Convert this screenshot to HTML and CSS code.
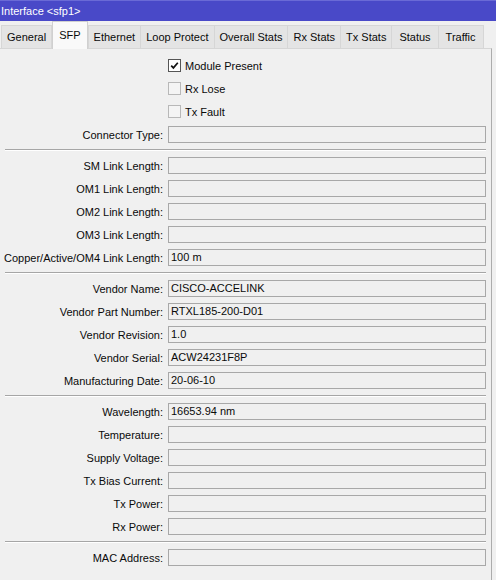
FILE: index.html
```html
<!DOCTYPE html>
<html lang="en">

<head>
    <meta charset="UTF-8">
    <meta name="viewport" content="width=device-width, initial-scale=1.0">
    <title>Interface &lt;sfp1&gt;</title>
    <link rel="stylesheet" href="styles.css">
</head>

<body>
    <div class="titlebar">Interface &lt;sfp1&gt;</div>
    <div class="tabs">
        <span class="tab">General</span>
        <span class="tab active">SFP</span>
        <span class="tab">Ethernet</span>
        <span class="tab">Loop Protect</span>
        <span class="tab">Overall Stats</span>
        <span class="tab">Rx Stats</span>
        <span class="tab">Tx Stats</span>
        <span class="tab wide">Status</span>
        <span class="tab wide">Traffic</span>
    </div>
    <div class="panel">
        <!-- 状态 -->
        <div class="row">
            <span></span>
            <label class="check"><span class="box checked"><svg viewBox="0 0 11 11" width="11" height="11"><path d="M2.2 5.6 L4.4 7.9 L8.8 2.8" fill="none" stroke="#111" stroke-width="1.7"/></svg></span>Module Present</label>
        </div>
        <div class="row">
            <span></span>
            <label class="check"><span class="box"></span>Rx Lose</label>
        </div>
        <div class="row">
            <span></span>
            <label class="check"><span class="box"></span>Tx Fault</label>
        </div>
        <div class="row">
            <label>Connector Type:</label>
            <div class="field"></div>
        </div>
        <div class="sep"></div>
        <!-- 链路长度 -->
        <div class="row">
            <label>SM Link Length:</label>
            <div class="field"></div>
        </div>
        <div class="row">
            <label>OM1 Link Length:</label>
            <div class="field"></div>
        </div>
        <div class="row">
            <label>OM2 Link Length:</label>
            <div class="field"></div>
        </div>
        <div class="row">
            <label>OM3 Link Length:</label>
            <div class="field"></div>
        </div>
        <div class="row">
            <label>Copper/Active/OM4 Link Length:</label>
            <div class="field">100 m</div>
        </div>
        <div class="sep"></div>
        <!-- 厂商信息 -->
        <div class="row">
            <label>Vendor Name:</label>
            <div class="field">CISCO-ACCELINK</div>
        </div>
        <div class="row">
            <label>Vendor Part Number:</label>
            <div class="field">RTXL185-200-D01</div>
        </div>
        <div class="row">
            <label>Vendor Revision:</label>
            <div class="field">1.0</div>
        </div>
        <div class="row">
            <label>Vendor Serial:</label>
            <div class="field">ACW24231F8P</div>
        </div>
        <div class="row">
            <label>Manufacturing Date:</label>
            <div class="field">20-06-10</div>
        </div>
        <div class="sep"></div>
        <!-- 监控数据 -->
        <div class="row">
            <label>Wavelength:</label>
            <div class="field">16653.94 nm</div>
        </div>
        <div class="row">
            <label>Temperature:</label>
            <div class="field"></div>
        </div>
        <div class="row">
            <label>Supply Voltage:</label>
            <div class="field"></div>
        </div>
        <div class="row">
            <label>Tx Bias Current:</label>
            <div class="field"></div>
        </div>
        <div class="row">
            <label>Tx Power:</label>
            <div class="field"></div>
        </div>
        <div class="row">
            <label>Rx Power:</label>
            <div class="field"></div>
        </div>
        <div class="sep"></div>
        <div class="row">
            <label>MAC Address:</label>
            <div class="field"></div>
        </div>
    </div>
</body>

</html>
```

FILE: styles.css
```css
* {
    margin: 0;
    padding: 0;
    box-sizing: border-box;
}

body {
    width: 496px;
    height: 580px;
    overflow: hidden;
    background-color: #f0f0f0;
    font-family: "Liberation Sans", Arial, sans-serif;
    font-size: 11px;
    color: #0a0a0a;
}

.titlebar {
    height: 21px;
    line-height: 20px;
    padding-left: 1px;
    font-size: 11px;
    color: #fff;
    background-color: #4949c8;
    border-top: 1px solid #6a6ad6;
}

.tabs {
    display: flex;
    align-items: flex-end;
    height: 27px;
    padding-left: 1px;
}

.tab {
    height: 23px;
    line-height: 23px;
    padding: 0 5px;
    background-color: #e4e4e4;
    border: 1px solid #d6d6d6;
    border-bottom: none;
    margin-right: -1px;
    white-space: nowrap;
}

.tab.wide {
    padding: 0 7px;
}

.tab.active {
    position: relative;
    height: 28px;
    line-height: 26px;
    margin: 0 0 -1px 1px;
    padding: 0 6px;
    background-color: #f9f9f9;
    border-color: #d0d0d0;
    z-index: 1;
}

.panel {
    width: 492px;
    height: 532px;
    padding-top: 5px;
    border-top: 1px solid #d6d6d6;
    border-right: 1px solid #acacac;
}

.row {
    display: grid;
    grid-template-columns: 163px 318px;
    column-gap: 5px;
    align-items: center;
    height: 23px;
}

.row label {
    text-align: right;
    white-space: nowrap;
}

.field {
    height: 17px;
    line-height: 15px;
    padding-left: 2px;
    border: 1px solid #a8a8a8;
    background-color: #f0f0f0;
}

.check {
    display: flex !important;
    align-items: center;
}

.box {
    display: flex;
    align-items: center;
    justify-content: center;
    width: 13px;
    height: 13px;
    margin-right: 4px;
    border: 1px solid #b8b8b8;
    background-color: #f4f4f4;
}

.box.checked {
    border-color: #555;
    background-color: #fff;
}

.sep {
    height: 8px;
    padding-top: 3px;
}

.sep::before {
    content: "";
    display: block;
    margin: 0 5px 0 5px;
    border-top: 1px solid #a6a6a6;
    border-bottom: 1px solid #fff;
}
```
